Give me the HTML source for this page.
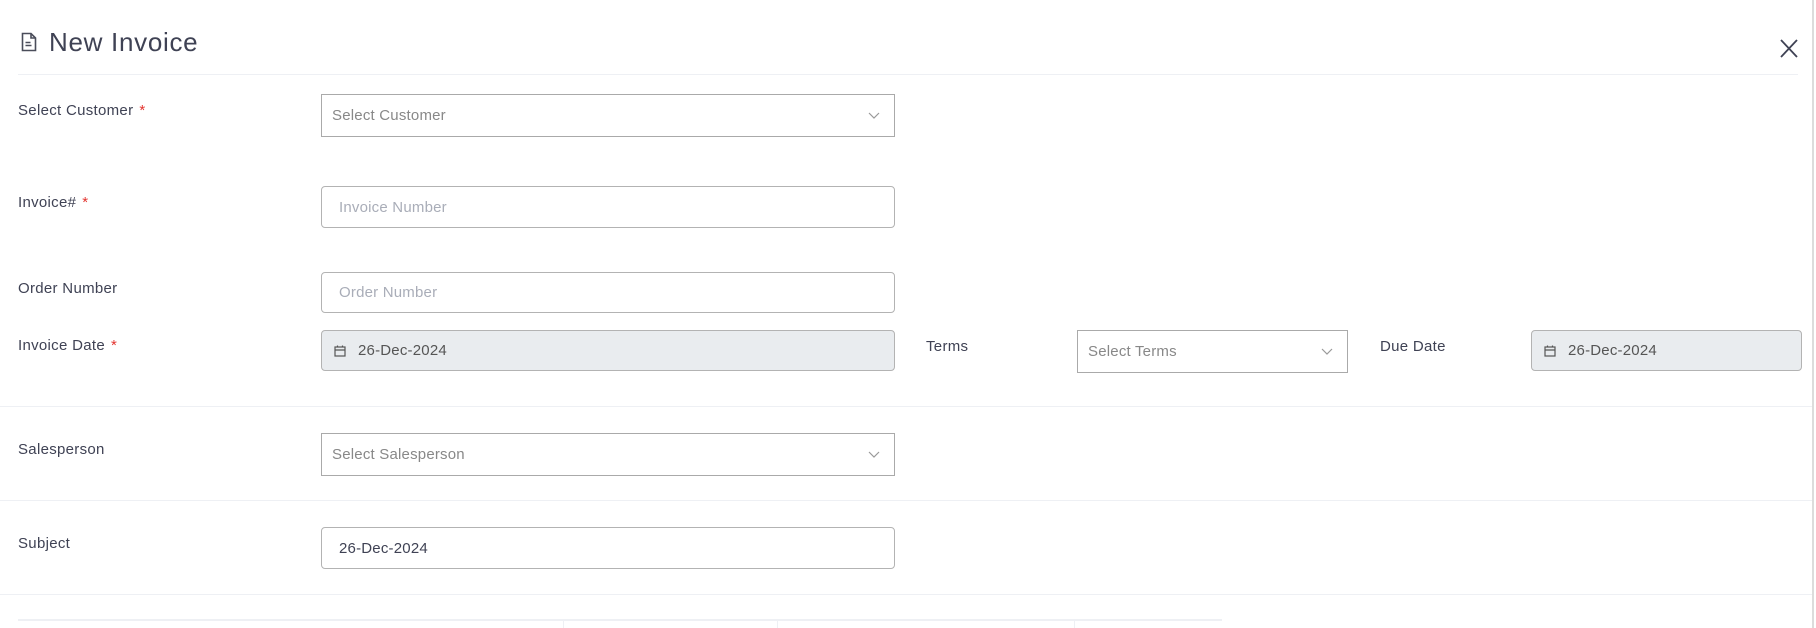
<!DOCTYPE html>
<html><head><meta charset="utf-8"><style>
*{box-sizing:border-box;margin:0;padding:0}
body{width:1816px;height:628px;background:#fff;font-family:"Liberation Sans",sans-serif;color:#3f4254;position:relative;overflow:hidden}
.a{position:absolute}
.lbl{position:absolute;left:18px;font-size:15px;color:#3f4254;letter-spacing:0.3px}
.req{color:#e3342f;margin-left:6px}
.sel{position:absolute;border:1px solid #aaa;background:#fff;font-size:15px;color:#888;padding-left:10px;display:flex;align-items:center;letter-spacing:0.2px}
.inp{position:absolute;border:1px solid #b3b3b3;border-radius:4px;background:#fff;font-size:15px;color:#a9adb8;padding-left:17px;display:flex;align-items:center;letter-spacing:0.2px}
.dis{background:#e9ecef;color:#555;padding-left:12px}
.chev{position:absolute;right:14px;top:50%;margin-top:-6px}
.hr{position:absolute;height:1px;background:#eef0f4}
</style></head><body>
<svg class="a" style="left:21px;top:32px" width="16" height="20" viewBox="0 0 16 20" fill="none" stroke="#4a4d5a" stroke-width="1.6"><path d="M1.5 1.5h8.5l4.5 4.5v12.5h-13z"/><path d="M10 1.5v4.5h4.5"/><path d="M4.5 10.5h5M4.5 13.5h6"/></svg>
<div class="a" style="left:49px;top:27px;font-size:26px;color:#3f4254;letter-spacing:0.7px">New Invoice</div>
<svg class="a" style="left:1780px;top:39px" width="18" height="19" viewBox="0 0 18 19" stroke="#3f4254" stroke-width="1.8"><path d="M1 1l16 17M17 1L1 18"/></svg>
<div class="hr" style="left:18px;top:74px;width:1780px"></div>
<div class="a" style="left:1812px;top:0;width:2px;height:628px;background:#dcdcdc"></div>

<div class="lbl" style="top:102px">Select Customer<span class="req">*</span></div>
<div class="sel" style="left:321px;top:94px;width:574px;height:43px">Select Customer<svg class="chev" width="12" height="10" viewBox="0 0 12 10" fill="none" stroke="#999" stroke-width="1.2"><path d="M1 3l5 5 5-5"/></svg></div>

<div class="lbl" style="top:194px">Invoice#<span class="req">*</span></div>
<div class="inp" style="left:321px;top:186px;width:574px;height:42px">Invoice Number</div>

<div class="lbl" style="top:280px">Order Number</div>
<div class="inp" style="left:321px;top:272px;width:574px;height:41px">Order Number</div>

<div class="lbl" style="top:337px">Invoice Date<span class="req">*</span></div>
<div class="inp dis" style="left:321px;top:330px;width:574px;height:41px"><svg width="12" height="12" viewBox="0 0 12 12" fill="none" stroke="#555" stroke-width="1.2"><rect x="1" y="2" width="10" height="9"/><path d="M1 5h10M3.5 0.5v2M8.5 0.5v2"/></svg><span style="margin-left:12px">26-Dec-2024</span></div>

<div class="a" style="left:926px;top:338px;font-size:15px;letter-spacing:0.3px">Terms</div>
<div class="sel" style="left:1077px;top:330px;width:271px;height:43px">Select Terms<svg class="chev" width="12" height="10" viewBox="0 0 12 10" fill="none" stroke="#999" stroke-width="1.2"><path d="M1 3l5 5 5-5"/></svg></div>

<div class="a" style="left:1380px;top:338px;font-size:15px;letter-spacing:0.3px">Due Date</div>
<div class="inp dis" style="left:1531px;top:330px;width:271px;height:41px"><svg width="12" height="12" viewBox="0 0 12 12" fill="none" stroke="#555" stroke-width="1.2"><rect x="1" y="2" width="10" height="9"/><path d="M1 5h10M3.5 0.5v2M8.5 0.5v2"/></svg><span style="margin-left:12px">26-Dec-2024</span></div>

<div class="hr" style="left:0;top:406px;width:1812px"></div>

<div class="lbl" style="top:441px">Salesperson</div>
<div class="sel" style="left:321px;top:433px;width:574px;height:43px">Select Salesperson<svg class="chev" width="12" height="10" viewBox="0 0 12 10" fill="none" stroke="#999" stroke-width="1.2"><path d="M1 3l5 5 5-5"/></svg></div>

<div class="hr" style="left:0;top:500px;width:1812px"></div>

<div class="lbl" style="top:535px">Subject</div>
<div class="inp" style="left:321px;top:527px;width:574px;height:42px;color:#3f4254;padding-left:17px">26-Dec-2024</div>

<div class="hr" style="left:0;top:594px;width:1812px"></div>
<div class="hr" style="left:18px;top:619px;width:1204px;height:2px"></div>
<div class="a" style="left:563px;top:620px;width:1px;height:8px;background:#eef0f4"></div>
<div class="a" style="left:777px;top:620px;width:1px;height:8px;background:#eef0f4"></div>
<div class="a" style="left:1074px;top:620px;width:1px;height:8px;background:#eef0f4"></div>
</body></html>
